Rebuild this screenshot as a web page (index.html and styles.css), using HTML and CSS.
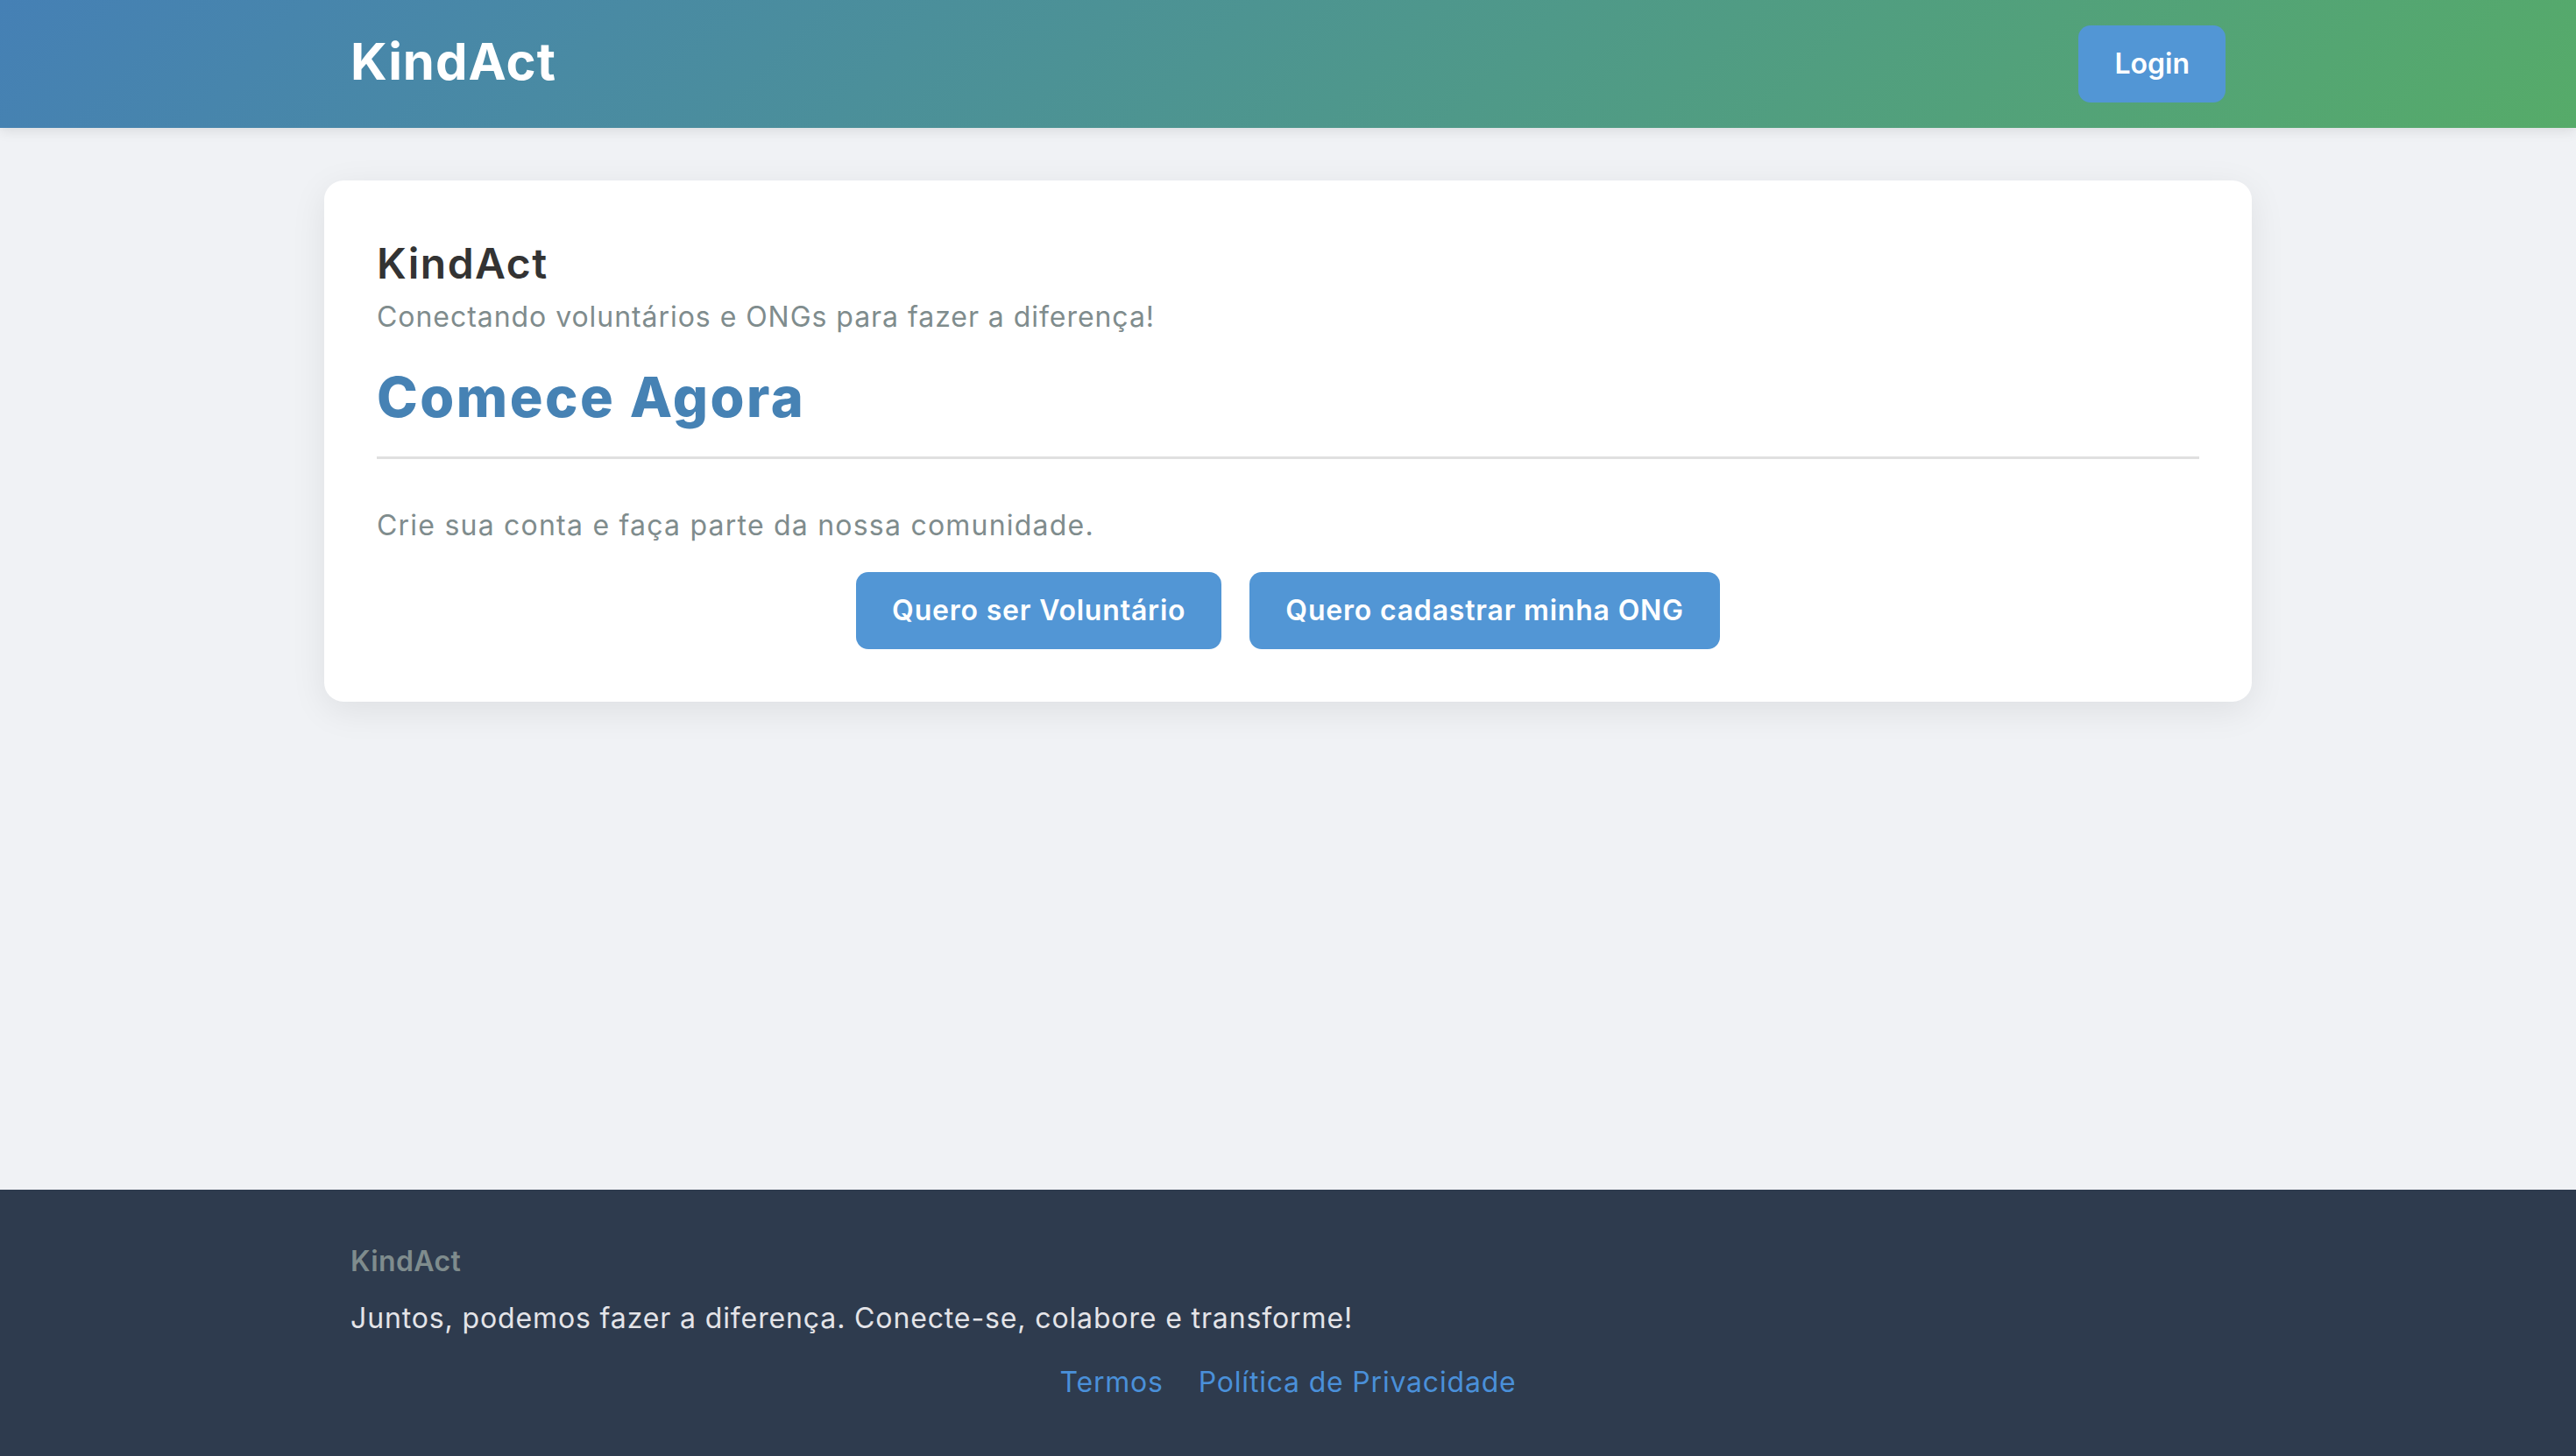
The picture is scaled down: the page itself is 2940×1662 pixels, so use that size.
FILE: index.html
```html
<!DOCTYPE html>
<html lang="pt-BR">
<head>
<meta charset="utf-8">
<title>KindAct</title>
<link rel="stylesheet" href="styles.css">
</head>
<body>
<header class="site-header">
  <div class="header-inner">
    <a class="logo" href="#">KindAct</a>
    <a class="btn btn-login" href="#">Login</a>
  </div>
</header>
<main class="main">
  <section class="card">
    <h1 class="card-title">KindAct</h1>
    <p class="card-subtitle">Conectando voluntários e ONGs para fazer a diferença!</p>
    <h2 class="card-heading">Comece Agora</h2>
    <p class="card-text">Crie sua conta e faça parte da nossa comunidade.</p>
    <div class="actions">
      <a class="btn btn-action" href="#">Quero ser Voluntário</a>
      <a class="btn btn-action" href="#">Quero cadastrar minha ONG</a>
    </div>
  </section>
</main>
<footer class="site-footer">
  <div class="footer-inner">
    <h3 class="footer-title">KindAct</h3>
    <p class="footer-text">Juntos, podemos fazer a diferença. Conecte-se, colabore e transforme!</p>
    <nav class="footer-links">
      <a href="#">Termos</a>
      <a href="#">Política de Privacidade</a>
    </nav>
  </div>
</footer>
</body>
</html>
```
FILE: styles.css
```css
* { box-sizing: border-box; }
html, body { height: 100%; }
body {
  margin: 0;
  min-height: 100vh;
  display: flex;
  flex-direction: column;
  background: #f0f2f5;
  font-family: "Inter", "Liberation Sans", sans-serif;
  color: #333;
}
a { text-decoration: none; }

.site-header {
  height: 146px;
  background: linear-gradient(135deg, #4580b5 0%, #56ab69 100%);
  box-shadow: 0 3px 14px rgba(0, 0, 0, 0.1);
  flex: none;
}
.header-inner {
  max-width: 2200px;
  height: 100%;
  margin: 0 auto;
  padding: 0 30px;
  display: flex;
  align-items: center;
  justify-content: space-between;
}
.logo {
  color: #fff;
  font-size: 58px;
  font-weight: 700;
  line-height: 1.2;
  letter-spacing: 1px;
  margin-bottom: 4px;
}
.btn {
  display: inline-block;
  background: #5296d5;
  color: #fff;
  font-weight: 600;
  border-radius: 14px;
}
.btn-login {
  font-size: 32px;
  line-height: 46px;
  padding: 21px 41px;
}

.main {
  flex: 1;
  padding-top: 60px;
}
.card {
  max-width: 2200px;
  margin: 0 auto;
  background: #fff;
  border-radius: 22px;
  padding: 60px;
  box-shadow: 0 10px 40px rgba(0, 0, 0, 0.08);
}
.card-title {
  margin: 0;
  font-size: 48px;
  font-weight: 600;
  line-height: 69px;
  letter-spacing: 1.5px;
  color: #333;
}
.card-subtitle {
  margin: 4px 0 0;
  font-size: 32px;
  line-height: 46px;
  letter-spacing: 0.95px;
  color: #7f8c8d;
}
.card-heading {
  margin: 30px 0 0;
  font-size: 63px;
  font-weight: 800;
  line-height: 76px;
  letter-spacing: 2.5px;
  color: #4682b4;
  padding-bottom: 30px;
  border-bottom: 3px solid #e0e0e0;
}
.card-text {
  margin: 53px 0 0;
  font-size: 32px;
  line-height: 46px;
  letter-spacing: 1.22px;
  color: #7f8c8d;
}
.actions {
  margin-top: 30px;
  display: flex;
  justify-content: center;
  gap: 32px;
}
.btn-action {
  font-size: 32px;
  line-height: 46px;
  letter-spacing: 0.8px;
  padding: 21px 41px;
}

.site-footer {
  flex: none;
  background: #2e3b4e;
  padding: 58px 30px 60px;
}
.footer-inner {
  max-width: 2140px;
  margin: 0 auto;
}
.footer-title {
  margin: 0;
  font-size: 32px;
  font-weight: 600;
  line-height: 48px;
  letter-spacing: 0.4px;
  color: #7f8c8d;
}
.footer-text {
  margin: 17px 0 0;
  font-size: 32px;
  line-height: 48px;
  letter-spacing: 0.87px;
  color: #e4e4e8;
}
.footer-links {
  margin-top: 25px;
  display: flex;
  justify-content: center;
  gap: 40px;
  font-size: 32px;
  line-height: 48px;
  letter-spacing: 0.8px;
}
.footer-links a { color: #4a90d9; }
```
